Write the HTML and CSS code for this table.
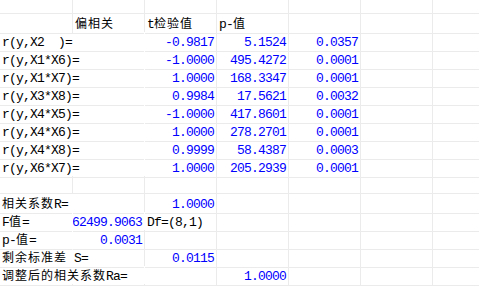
FILE: index.html
```html
<!DOCTYPE html>
<html lang="zh">
<head>
<meta charset="utf-8">
<title>偏相关</title>
<link rel="stylesheet" href="styles.css">
</head>
<body>
<div class="sheet">
  <div class="row top">
    <div class="c"></div><div class="c"></div><div class="c"></div><div class="c"></div><div class="c"></div><div class="c"></div><div class="c"></div>
  </div>
  <div class="row">
    <div class="c"></div>
    <div class="c"><span><span class="cj">偏相关</span></span></div>
    <div class="c"><span>t<span class="cj">检验值</span></span></div>
    <div class="c"><span>p-<span class="cj">值</span></span></div>
    <div class="c"></div><div class="c"></div><div class="c"></div>
  </div>

  <div class="row">
    <div class="c span2 nr">r(y,X2  )=</div>
    <div class="c num">-0.9817</div><div class="c num">5.1524</div><div class="c num">0.0357</div>
    <div class="c"></div><div class="c"></div>
  </div>
  <div class="row">
    <div class="c span2 nr">r(y,X1*X6)=</div>
    <div class="c num">-1.0000</div><div class="c num">495.4272</div><div class="c num">0.0001</div>
    <div class="c"></div><div class="c"></div>
  </div>
  <div class="row">
    <div class="c span2 nr">r(y,X1*X7)=</div>
    <div class="c num">1.0000</div><div class="c num">168.3347</div><div class="c num">0.0001</div>
    <div class="c"></div><div class="c"></div>
  </div>
  <div class="row">
    <div class="c span2 nr">r(y,X3*X8)=</div>
    <div class="c num">0.9984</div><div class="c num">17.5621</div><div class="c num">0.0032</div>
    <div class="c"></div><div class="c"></div>
  </div>
  <div class="row">
    <div class="c span2 nr">r(y,X4*X5)=</div>
    <div class="c num">-1.0000</div><div class="c num">417.8601</div><div class="c num">0.0001</div>
    <div class="c"></div><div class="c"></div>
  </div>
  <div class="row">
    <div class="c span2 nr">r(y,X4*X6)=</div>
    <div class="c num">1.0000</div><div class="c num">278.2701</div><div class="c num">0.0001</div>
    <div class="c"></div><div class="c"></div>
  </div>
  <div class="row">
    <div class="c span2 nr">r(y,X4*X8)=</div>
    <div class="c num">0.9999</div><div class="c num">58.4387</div><div class="c num">0.0003</div>
    <div class="c"></div><div class="c"></div>
  </div>
  <div class="row">
    <div class="c span2 nr">r(y,X6*X7)=</div>
    <div class="c num">1.0000</div><div class="c num">205.2939</div><div class="c num">0.0001</div>
    <div class="c"></div><div class="c"></div>
  </div>

  <div class="row">
    <div class="c"></div><div class="c"></div><div class="c"></div><div class="c"></div><div class="c"></div><div class="c"></div><div class="c"></div>
  </div>

  <div class="row">
    <div class="c span2"><span><span class="cj">相关系数</span>R=</span></div>
    <div class="c num">1.0000</div>
    <div class="c"></div><div class="c"></div><div class="c"></div><div class="c"></div>
  </div>
  <div class="row">
    <div class="c nr"><span>F<span class="cj">值</span>=</span></div>
    <div class="c num nr clip">62499.9063</div>
    <div class="c">Df=(8,1)</div>
    <div class="c"></div><div class="c"></div><div class="c"></div><div class="c"></div>
  </div>
  <div class="row">
    <div class="c nr"><span>p-<span class="cj">值</span>=</span></div>
    <div class="c num">0.0031</div>
    <div class="c"></div><div class="c"></div><div class="c"></div><div class="c"></div><div class="c"></div>
  </div>
  <div class="row">
    <div class="c span2"><span><span class="cj">剩余标准差</span> S=</span></div>
    <div class="c num">0.0115</div>
    <div class="c"></div><div class="c"></div><div class="c"></div><div class="c"></div>
  </div>
  <div class="row">
    <div class="c span2 nr"><span><span class="cj">调整后的相关系数</span>Ra=</span></div>
    <div class="c"></div>
    <div class="c num">1.0000</div>
    <div class="c"></div><div class="c"></div><div class="c"></div>
  </div>
  <div class="row">
    <div class="c"></div><div class="c"></div><div class="c"></div><div class="c"></div><div class="c"></div><div class="c"></div><div class="c"></div>
  </div>
</div>
</body>
</html>
```

FILE: styles.css
```css
html, body {
  margin: 0;
  padding: 0;
  background: #ffffff;
}

body {
  width: 479px;
  height: 286px;
  overflow: hidden;
}

.sheet {
  display: flex;
  flex-direction: column;
  width: 505px;
}

.row {
  display: grid;
  grid-template-columns: 73px repeat(6, 72px);
  height: 18px;
  flex: none;
}

.row.top {
  height: 14px;
}

.c {
  box-sizing: border-box;
  display: flex;
  align-items: flex-start;
  min-width: 0;
  padding: 2px 2px 0 2px;
  border-right: 1px solid #ebebeb;
  border-bottom: 1px solid #ebebeb;
  white-space: pre;
  font-family: "Liberation Mono", "Noto Sans CJK SC", monospace;
  font-size: 13px;
  line-height: 17px;
  letter-spacing: -0.8px;
  color: #000000;
}

.span2 {
  grid-column: span 2;
}

.nr {
  border-right-color: #ffffff;
}

.num {
  justify-content: flex-end;
  color: #0000ff;
}

.clip {
  overflow: hidden;
}

.cj {
  font-family: "Noto Sans CJK SC", sans-serif;
  font-size: 12px;
  line-height: 10px;
  letter-spacing: 1px;
}
```
